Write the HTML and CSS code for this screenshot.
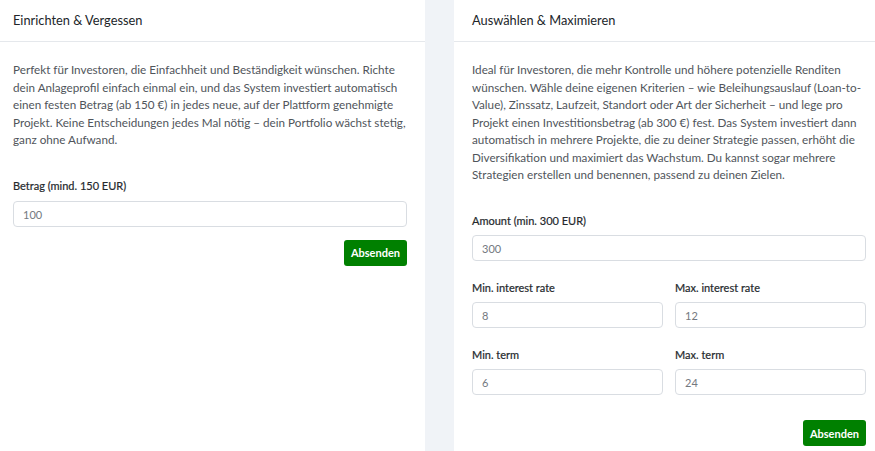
FILE: index.html
```html
<!DOCTYPE html>
<html lang="de">
<head>
<meta charset="utf-8">
<link rel="stylesheet" href="styles.css">
</head>
<body>
<div class="cards">
  <section class="card">
    <header class="card-head">Einrichten &amp; Vergessen</header>
    <div class="card-body">
      <p class="desc">Perfekt für Investoren, die Einfachheit und Beständigkeit wünschen. Richte dein Anlageprofil einfach einmal ein, und das System investiert automatisch einen festen Betrag (ab 150 €) in jedes neue, auf der Plattform genehmigte Projekt. Keine Entscheidungen jedes Mal nötig – dein Portfolio wächst stetig, ganz ohne Aufwand.</p>
      <form class="form form-simple">
        <div class="field">
          <label class="label">Betrag (mind. 150 EUR)</label>
          <input class="input" type="text" placeholder="100">
        </div>
        <div class="actions"><button type="button" class="btn">Absenden</button></div>
      </form>
    </div>
  </section>
  <section class="card">
    <header class="card-head">Auswählen &amp; Maximieren</header>
    <div class="card-body">
      <p class="desc">Ideal für Investoren, die mehr Kontrolle und höhere potenzielle Renditen wünschen. Wähle deine eigenen Kriterien – wie Beleihungsauslauf (Loan-to-Value), Zinssatz, Laufzeit, Standort oder Art der Sicherheit – und lege pro Projekt einen Investitionsbetrag (ab 300 €) fest. Das System investiert dann automatisch in mehrere Projekte, die zu deiner Strategie passen, erhöht die Diversifikation und maximiert das Wachstum. Du kannst sogar mehrere Strategien erstellen und benennen, passend zu deinen Zielen.</p>
      <form class="form form-adv">
        <div class="field">
          <label class="label">Amount (min. 300 EUR)</label>
          <input class="input" type="text" placeholder="300">
        </div>
        <div class="row">
          <div class="field">
            <label class="label">Min. interest rate</label>
            <input class="input" type="text" placeholder="8">
          </div>
          <div class="field">
            <label class="label">Max. interest rate</label>
            <input class="input" type="text" placeholder="12">
          </div>
        </div>
        <div class="row">
          <div class="field">
            <label class="label">Min. term</label>
            <input class="input" type="text" placeholder="6">
          </div>
          <div class="field">
            <label class="label">Max. term</label>
            <input class="input" type="text" placeholder="24">
          </div>
        </div>
        <div class="actions actions-adv"><button type="button" class="btn">Absenden</button></div>
      </form>
    </div>
  </section>
</div>
</body>
</html>
```
FILE: styles.css
```css
html, body {
  margin: 0;
  padding: 0;
  background: #f0f3f7;
  font-family: Lato, "Open Sans", sans-serif;
  overflow: hidden;
}
.cards {
  display: flex;
  gap: 29px;
  margin-left: -5px;
  height: 451px;
}
.card {
  flex: 0 0 430px;
  background: #fff;
}
.card-head {
  height: 42px;
  box-sizing: border-box;
  border-bottom: 1px solid #e5e8ec;
  padding: 0 18px 2px;
  display: flex;
  align-items: center;
  font-size: 12.8px;
  color: #212529;
}
.card-body {
  padding: 19px 18px 0;
}
.desc {
  margin: 0;
  font-size: 11.7px;
  line-height: 17.5px;
  color: #50555b;
}
.form {
  display: flex;
  flex-direction: column;
  margin-top: 30px;
}
.form-simple { gap: 12.5px; }
.form-simple .field { gap: 8.5px; }
.form-adv { gap: 19.5px; }
.field {
  display: flex;
  flex-direction: column;
  gap: 7.5px;
  flex: 1;
}
.row {
  display: flex;
  gap: 12px;
}
.label {
  font-size: 11px;
  color: #25292d;
  line-height: 14px;
  -webkit-text-stroke: 0.2px #25292d;
}
.input {
  height: 26px;
  box-sizing: border-box;
  border: 1px solid #d9dde2;
  border-radius: 4px;
  padding: 0 9px;
  font-family: inherit;
  font-size: 11px;
  color: #333;
  width: 100%;
  outline: none;
}
.input::placeholder { color: #74797f; }
.actions {
  display: flex;
  justify-content: flex-end;
}
.actions-adv { margin-top: 5.5px; }
.btn {
  height: 26px;
  padding: 0 7px;
  border: none;
  border-radius: 3px;
  background: #008000;
  color: #fff;
  font-family: inherit;
  font-weight: 700;
  font-size: 11px;
}
```
